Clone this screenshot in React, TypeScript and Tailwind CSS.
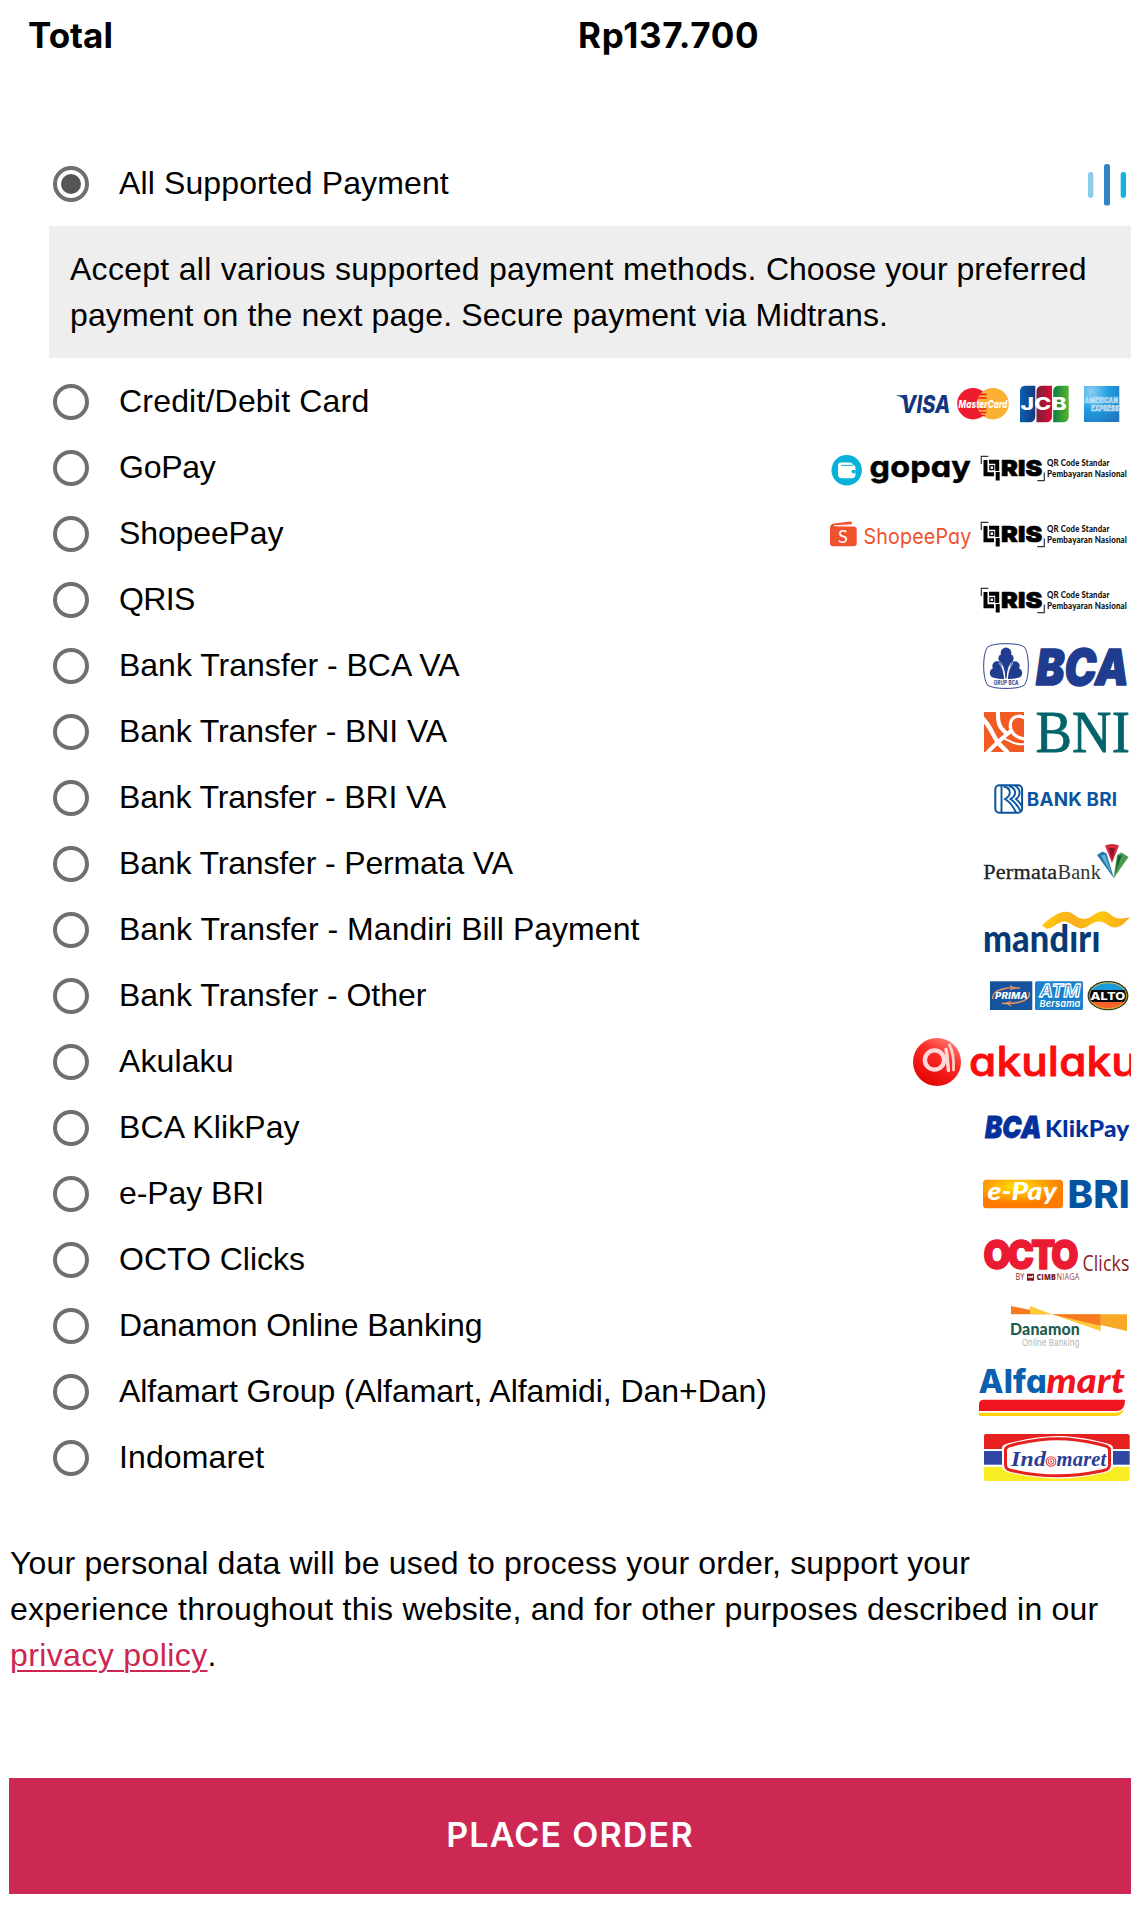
import type { ReactNode } from "react";

const INTER = "Inter, sans-serif";
const OPEN = "'Open Sans', sans-serif";
const LATO = "Lato, sans-serif";
const SERIF = "'Liberation Serif', serif";

/** A word inside a logo, fitted to the given width. */
function Word({
  x,
  y,
  w,
  size,
  fill,
  font = OPEN,
  weight = 700,
  italic = false,
  className,
  stroke,
  strokeWidth,
  spacing,
  children,
}: {
  x: number;
  y: number;
  w: number;
  size: number;
  fill: string;
  font?: string;
  weight?: number;
  italic?: boolean;
  className?: string;
  stroke?: string;
  strokeWidth?: number;
  spacing?: number;
  children: string;
}) {
  return (
    <text
      x={x}
      y={y}
      textLength={w}
      lengthAdjust="spacingAndGlyphs"
      letterSpacing={spacing}
      fontSize={size}
      fontFamily={font}
      fontWeight={weight}
      fontStyle={italic ? "italic" : "normal"}
      fill={fill}
      stroke={stroke}
      strokeWidth={strokeWidth}
      strokeLinejoin="round"
      className={className}
    >
      {children}
    </text>
  );
}

function Midtrans() {
  return (
    <>
      <rect x="268" y="21" width="5.3" height="26" rx="2.4" fill="#8ccbea" />
      <rect x="284" y="13" width="6" height="41.5" rx="2.6" fill="#3583c7" />
      <rect x="300.7" y="21" width="5.3" height="26" rx="2.4" fill="#12b2e0" />
    </>
  );
}

function Cards() {
  return (
    <>
      <defs>
        <linearGradient id="jcbBlue">
          <stop offset="0" stopColor="#0a5fb0" />
          <stop offset="1" stopColor="#123a80" />
        </linearGradient>
        <linearGradient id="jcbRed">
          <stop offset="0" stopColor="#7a2038" />
          <stop offset="1" stopColor="#dc0a38" />
        </linearGradient>
        <linearGradient id="jcbGreen">
          <stop offset="0" stopColor="#0a8040" />
          <stop offset="1" stopColor="#58b430" />
        </linearGradient>
        <radialGradient id="amex" cx="0.2" cy="0.15" r="1">
          <stop offset="0" stopColor="#8ccdf2" />
          <stop offset="0.5" stopColor="#1f9fe0" />
          <stop offset="1" stopColor="#2277c2" />
        </radialGradient>
      </defs>
      <path d="M76.7 26.3h8l3 4.5-2 2c-2-3.5-5-5.5-9-6z" fill="#133580" />
      <Word x={81} y={44.3} w={49.5} size={24} fill="#133580" font={INTER} weight={800} italic>
        VISA
      </Word>
      <circle cx="153" cy="34.7" r="15.8" fill="#ee1c2e" />
      <circle cx="172.9" cy="34.7" r="15.8" fill="#fcb034" />
      <path
        d="M159.500 25.500h7M158.500 29h8M158.500 40h8M159.500 43.500h7M161 46.500h4"
        stroke="#ee1c2e"
        strokeWidth="1.600"
      />
      <Word x={138.500} y={38.800} w={49} size={11} fill="#fff" font={INTER} weight={800} italic>
        MasterCard
      </Word>
      <path d="M205 16.700h10.300v31a5.600 5.600 0 0 1-5.600 5.600H200V22a5.300 5.300 0 0 1 5-5.300z" fill="url(#jcbBlue)" />
      <path d="M221.600 16.700H232v31a5.600 5.600 0 0 1-5.600 5.600h-9.900V22a5.300 5.300 0 0 1 5.100-5.300z" fill="url(#jcbRed)" />
      <path d="M238.300 16.700h10.400v31a5.600 5.600 0 0 1-5.600 5.600H233.200V22a5.300 5.300 0 0 1 5.100-5.300z" fill="url(#jcbGreen)" />
      <Word x={200.500} y={41} w={46.500} size={17.500} fill="#fff" font={INTER} weight={800}>
        JCB
      </Word>
      <rect x="264" y="17" width="35.300" height="36" fill="url(#amex)" />
      <Word x={264.600} y={34.300} w={33.500} size={7.500} fill="#2a8fd0" stroke="#d8effb" strokeWidth={0.700} font={INTER}>
        AMERICAN
      </Word>
      <Word x={271} y={42} w={28} size={7.500} fill="#2a8fd0" stroke="#d8effb" strokeWidth={0.700} font={INTER}>
        EXPRESS
      </Word>
    </>
  );
}

function Qris() {
  return (
    <>
      <path d="M161.300 29v-7.600h7M217.300 45.600h7v-8" fill="none" stroke="#333" strokeWidth="1.200" />
      <path d="M165.500 25v14.200h8.500M169 26.800h8.200V36" fill="none" stroke="#000" strokeWidth="4" />
      <rect x="169.900" y="30.800" width="3.800" height="3.800" fill="none" stroke="#000" strokeWidth="1.300" />
      <path d="M177.700 37v8.500" stroke="#000" strokeWidth="4" />
      <Word x={181} y={41} w={41.500} size={22} fill="#000" font={INTER} weight={900} stroke="#000" strokeWidth={0.700}>
        RIS
      </Word>
      <Word x={227} y={30.800} w={62.500} size={9.300} fill="#111" font={LATO} weight={900}>
        QR Code Standar
      </Word>
      <Word x={227} y={41.500} w={80} size={9.300} fill="#111" font={LATO} weight={900}>
        Pembayaran Nasional
      </Word>
    </>
  );
}

function GoPay() {
  return (
    <>
      <circle cx="26.700" cy="35.300" r="15.200" fill="#06b2d8" />
      <rect x="18" y="29.500" width="17.500" height="13.700" rx="4" fill="#fff" />
      <path d="M18 33v-2.500q0-3 3-3h9q2.500 0 3 2.500" fill="#fff" />
      <path d="M21 30.400h12" stroke="#06b2d8" strokeWidth="1" />
      <path d="M35.600 35h-2.500a1.600 1.600 0 0 0 0 3.200h2.500z" fill="#06b2d8" />
      <Word
        x={49.500}
        y={42}
        w={101.500}
        size={29.500}
        fill="#000"
        font={INTER}
        weight={700}
        stroke="#000"
        strokeWidth={0.500}
        className="[font-feature-settings:'cv11']"
      >
        gopay
      </Word>
      <Qris />
    </>
  );
}

function ShopeePay() {
  return (
    <>
      <path d="M10 27q0-4 4-4.500l16-2q2-.2 2 1.800v1.500L14 25.500h19.500q3.200 0 3.200 3.200v13.400q0 3.200-3.200 3.200H13.200Q10 45.300 10 42.100z" fill="#f1512c" />
      <path d="M14 24.700l18-.9" stroke="#fff" strokeWidth="1" />
      <Word x={18} y={42} w={10} size={17.500} fill="#fff" font={LATO} weight={400}>
        S
      </Word>
      <Word x={43.500} y={43.300} w={108} size={21} fill="#f1512c" font={INTER} weight={400} className="[font-feature-settings:'cv11']">
        ShopeePay
      </Word>
      <Qris />
    </>
  );
}

function Bca() {
  return (
    <>
      <path
        d="M186 10.700c9 0 15 1 18.500 3.500 2.500 4 3.800 10 3.800 18.800s-1.300 15-3.800 19c-3.500 2.400-9.500 3.400-18.500 3.400s-15-1-18.500-3.400c-2.500-4-3.800-10.200-3.800-19s1.300-14.800 3.800-18.800c3.500-2.500 9.500-3.500 18.500-3.500z"
        fill="#fff"
        stroke="#2a3f8f"
        strokeWidth="1"
      />
      <g fill="#203c8f">
        <circle cx="186" cy="20" r="5.400" />
        <circle cx="183" cy="25.500" r="4.600" />
        <circle cx="189" cy="25.500" r="4.600" />
        <path d="M179 27.500q6 4.500 6.400 18h1.200q.4-13.500 6.400-18z" />
        <circle cx="177" cy="33" r="4.700" />
        <circle cx="174.800" cy="40" r="5" />
        <path d="M180 30.500q4 6 4.300 15.500-5 .3-9.500-1l-2-8z" />
        <circle cx="195" cy="33" r="4.700" />
        <circle cx="197.200" cy="40" r="5" />
        <path d="M192 30.500q-4 6-4.300 15.500 5 .3 9.500-1l2-8z" />
      </g>
      <path d="M184.700 47.500q-.3-11-5.700-17.500M187.300 47.500q.3-11 5.700-17.500" fill="none" stroke="#fff" strokeWidth="0.700" />
      <Word x={173.700} y={52.200} w={25} size={5.800} fill="#2a3f8f" font={INTER}>
        GRUP BCA
      </Word>
      <Word x={216} y={51.700} w={93} size={49.500} fill="#203c8f" font={INTER} weight={900} italic stroke="#203c8f" strokeWidth={1.500}>
        BCA
      </Word>
    </>
  );
}

function Bni() {
  return (
    <>
      <clipPath id="bniBox">
        <rect x="164" y="13" width="40" height="40" />
      </clipPath>
      <rect x="164" y="13" width="40" height="40" fill="#f15a22" />
      <g clipPath="url(#bniBox)" fill="none" stroke="#fff">
        <path d="M162 19c8 7 10 16 15 23 3 5 7 7 11 12" strokeWidth="4.400" />
        <path d="M178 11c-.5 12 1 17 7 22 3 2.500 3 3 3 3" strokeWidth="4" />
        <path d="M206 20c-6-5-14-3-15.500 4-1.500 8 4 15 15 16" strokeWidth="3.200" />
        <path d="M192 31c-7 6-15 12-26 24" strokeWidth="4" />
        <path d="M180 39c7-1 11 8 24 6" strokeWidth="2" />
      </g>
      <Word x={215.500} y={52.800} w={94.500} size={59} fill="#02646a" font={SERIF} weight={400} stroke="#02646a" strokeWidth={0.800}>
        BNI
      </Word>
    </>
  );
}

function Bri() {
  return (
    <>
      <rect x="175.300" y="20.300" width="26.800" height="27.500" rx="4" fill="#fff" stroke="#0b559f" strokeWidth="2" />
      <path
        d="M181.500 21v26M183.500 21.500c7 1 9 8 1.500 12.500 5 3 8 7 11 13.500M189 21c7 2 8.500 9 1.500 13 4.500 3 7.500 7 10 12M195 21c6 3 6 9.500 1 13 2.500 2 4 4 5.500 6.500"
        fill="none"
        stroke="#0b559f"
        strokeWidth="1.900"
      />
      <Word x={206.800} y={41.200} w={90.500} size={18.800} fill="#0b559f" font={INTER} weight={700}>
        BANK BRI
      </Word>
    </>
  );
}

function Permata() {
  return (
    <>
      <Word x={163.300} y={48.300} w={74} size={20.500} fill="#222" font={SERIF} weight={400} stroke="#222" strokeWidth={0.300}>
        Permata
      </Word>
      <Word x={237.500} y={48.300} w={43.500} size={20.500} fill="#333" font={SERIF} weight={400}>
        Bank
      </Word>
      <path d="M285 14.500q7-3 14 0L292 32z" fill="#d32a40" />
      <path d="M289 17h6l-3 12z" fill="#8c1528" />
      <path d="M277 24l5.500-3.500 4 2 7.500 25z" fill="#2277a8" />
      <path d="M281 24.500l4-1 7 20z" fill="#5fb3d6" />
      <path d="M308.500 26l-7-4.500-4.500 2.500-3.500 23.500z" fill="#4a9a4c" />
      <path d="M298 25l4-1-7 19z" fill="#15603c" />
    </>
  );
}

function Mandiri() {
  return (
    <>
      <defs>
        <linearGradient id="ribbon">
          <stop offset="0" stopColor="#fec80e" />
          <stop offset="0.400" stopColor="#f9ae1a" />
          <stop offset="0.650" stopColor="#fec80e" />
          <stop offset="1" stopColor="#f7a71c" />
        </linearGradient>
      </defs>
      <path
        d="M222 28.500C231 20 239 14.500 247 14.800c7 .5 9 7 17 7.200 7 0 11-7.500 19-7.800 7 0 9 7.300 17 7.300 4 0 7-.8 9.800-1.300-5 6-9 10-14.800 10.200-7 0-9-5.900-16-5.900s-12 6.700-17 6.900c-8 0-11-6.700-18-6.900-6 0-11 7.300-17.500 7.300z"
        fill="url(#ribbon)"
      />
      <Word x={163} y={55.300} w={117.500} size={37.500} fill="#053a74" font={LATO} weight={900}>
        mandırı
      </Word>
    </>
  );
}

function OtherBanks() {
  return (
    <>
      <clipPath id="altoClip">
        <ellipse cx="288" cy="32.700" rx="19.500" ry="13.600" />
      </clipPath>
      <rect x="170" y="18.300" width="42.300" height="28.700" fill="#15539f" />
      <path d="M173 36c-2-5 4-9 12-10.500 5-.9 11-1 15-.3M209 29c2 5-3 9-11 10.500-5 .9-12 1.300-16 .8" fill="none" stroke="#f0955a" strokeWidth="1.400" />
      <path d="M190 22.500l4.500 3-4.500 1M191 43l-5-3 5-1.500" fill="none" stroke="#f0955a" strokeWidth="1.100" />
      <Word x={175} y={35.800} w={33} size={9.300} fill="#fff" font={INTER} weight={800} italic>
        PRIMA
      </Word>
      <rect x="215" y="18.300" width="48" height="28.700" rx="1.500" fill="#1a80cb" />
      <Word x={219.500} y={34.300} w={41} size={18} fill="#1a80cb" stroke="#fff" strokeWidth={1.300} font={INTER} weight={700} italic>
        ATM
      </Word>
      <Word x={219.500} y={43.600} w={41} size={9.500} fill="#fff" font={INTER} weight={600} italic>
        Bersama
      </Word>
      <g clipPath="url(#altoClip)">
        <rect x="267" y="18" width="42" height="10" fill="#1a9be0" />
        <rect x="267" y="27" width="42" height="12" fill="#0a0a0a" />
        <rect x="267" y="39" width="42" height="9" fill="#f7622a" />
      </g>
      <ellipse cx="288" cy="32.700" rx="19.800" ry="14" fill="none" stroke="#28301c" strokeWidth="1.200" />
      <ellipse cx="288" cy="32.700" rx="18.800" ry="13" fill="none" stroke="#d8c030" strokeWidth="0.900" />
      <Word x={270.500} y={36.600} w={35} size={10.800} fill="#fff" font={INTER} weight={800}>
        ALTO
      </Word>
    </>
  );
}

function Akulaku() {
  return (
    <>
      <defs>
        <linearGradient id="aku" x1="0.800" y1="0.100" x2="0.300" y2="1">
          <stop offset="0" stopColor="#ff7068" />
          <stop offset="0.350" stopColor="#fb2a26" />
          <stop offset="1" stopColor="#e20404" />
        </linearGradient>
      </defs>
      <circle cx="117" cy="33" r="24" fill="url(#aku)" />
      <circle cx="114.500" cy="31" r="9.600" fill="none" stroke="#ffd9d9" strokeWidth="4.400" />
      <path d="M126 20.500c1.500 6 1.500 14 2.500 21" fill="none" stroke="#ffd9d9" strokeWidth="3.400" strokeLinecap="round" />
      <path d="M129.500 16c3.500 7 4.500 16 4 25" fill="none" stroke="#ffd0cc" strokeWidth="2.800" strokeLinecap="round" />
      <Word
        x={149}
        y={46.500}
        w={169}
        size={40.500}
        fill="#fb0d0d"
        font={INTER}
        weight={500}
        stroke="#fb0d0d"
        strokeWidth={0.900}
        className="[font-feature-settings:'cv11']"
      >
        akulaku
      </Word>
    </>
  );
}

function KlikPay() {
  return (
    <>
      <Word x={165} y={42.500} w={56.500} size={30.500} fill="#03309c" font={INTER} weight={900} italic stroke="#03309c" strokeWidth={0.800}>
        BCA
      </Word>
      <Word x={225} y={42} w={84.500} size={23} fill="#03309c" font={LATO} weight={900}>
        KlikPay
      </Word>
    </>
  );
}

function EPay() {
  return (
    <>
      <defs>
        <radialGradient id="epay" cx="0.420" cy="0.250" r="0.600">
          <stop offset="0" stopColor="#ffe600" />
          <stop offset="0.500" stopColor="#ffae00" />
          <stop offset="1" stopColor="#fe7a00" />
        </radialGradient>
      </defs>
      <rect x="163" y="18.700" width="80" height="28.500" rx="3.500" fill="url(#epay)" />
      <Word x={167.500} y={39.300} w={69.500} size={24} fill="#fff" font={LATO} weight={900} italic>
        e-Pay
      </Word>
      <Word x={247.500} y={47} w={62.500} size={38} fill="#0354a0" font={INTER} weight={800}>
        BRI
      </Word>
    </>
  );
}

function Octo() {
  return (
    <>
      <Word x={163.500} y={42.300} w={92} size={40} fill="#ea1b33" font={INTER} weight={900} stroke="#ea1b33" strokeWidth={1.600} spacing={-3.200}>
        OCTO
      </Word>
      <Word x={262.500} y={44} w={47} size={22} fill="#8c1a1e" weight={400}>
        Clicks
      </Word>
      <Word x={195.500} y={53} w={9} size={8.500} fill="#8c2a2e" weight={400}>
        BY
      </Word>
      <rect x="207" y="46.700" width="7" height="7" fill="#8c0f18" />
      <path d="M208 49.300h3.500l1.500-1v2.500h-5z" fill="#fff" />
      <Word x={216.500} y={53} w={19.500} size={8.500} fill="#7a1a20" weight={800}>
        CIMB
      </Word>
      <Word x={236.500} y={53} w={23} size={8.500} fill="#9c4a50" weight={400}>
        NIAGA
      </Word>
    </>
  );
}

function Danamon() {
  return (
    <>
      <path d="M191 13l40.700 8.300H191z" fill="#f47b20" />
      <path d="M210 13l22 8.300h-22z" fill="#fdc83a" />
      <path d="M231.700 21.300l49 16.700V21.300z" fill="#fdc83a" />
      <path d="M231.700 21.300l49 11.500V21.300z" fill="#f47b20" />
      <path d="M280.700 21.300H307V38l-26.300-6z" fill="#f9a825" />
      <Word x={190} y={42.300} w={70} size={16} fill="#1e5b50" font={LATO} weight={900}>
        Danamon
      </Word>
      <Word x={202} y={52.700} w={57.500} size={9.300} fill="#b4b4b4" font={INTER} weight={400}>
        Online Banking
      </Word>
    </>
  );
}

function Alfamart() {
  return (
    <>
      <Word x={158.500} y={34.300} w={68.500} size={32.500} fill="#0b5fae" font={INTER} weight={800} className="[font-feature-settings:'cv11']">
        Alfa
      </Word>
      <Word x={226.500} y={34.300} w={78.500} size={34.500} fill="#ee1520" font={LATO} weight={900} italic>
        mart
      </Word>
      <path d="M164 40.700h141q0 11.300-9 11.300H159v-6.500q0-4.800 5-4.800z" fill="#ee1520" />
      <path d="M159 53.700h136q5 0 9-3.500-2 6.700-9 6.700H159z" fill="#ffd20a" />
    </>
  );
}

function Indomaret() {
  return (
    <>
      <clipPath id="indoBox">
        <rect x="164" y="9" width="145.700" height="47" rx="2" />
      </clipPath>
      <g clipPath="url(#indoBox)">
        <rect x="164" y="9" width="146" height="15" fill="#e5201f" />
        <rect x="164" y="24" width="146" height="18" fill="#fff" />
        <rect x="164" y="26" width="146" height="13.700" fill="#3048a4" />
        <rect x="164" y="42" width="146" height="14" fill="#f8ec22" />
      </g>
      <path
        d="M237.500 11c14 0 30 2.500 44 6 8 1.800 11.500 3 11.500 6v18c0 4-3 5.500-11 7.500-14 3-30 5-44.500 5s-30.500-2-44.500-5c-8-2-11-3.500-11-7.500V23c0-3 3.500-4.200 11.500-6 14-3.500 30-6 44-6z"
        fill="#fff"
      />
      <path
        d="M237.500 13.700c14 0 29 2.500 42 5.500 8 1.800 10 3 10 6v14.500c0 4-2 5-9.500 6.500-14 3-28.500 4.600-42.500 4.600s-28.500-1.600-42.500-4.600c-7.500-1.500-9.500-2.500-9.500-6.500V25.200c0-3 2-4.200 10-6 13-3 28-5.500 42-5.500z"
        fill="#fff"
        stroke="#e5201f"
        strokeWidth="3"
      />
      <Word x={191} y={41.300} w={35} size={21} fill="#2a3c94" font={SERIF} weight={700} italic>
        Ind
      </Word>
      <Word x={236.500} y={41.300} w={50} size={21} fill="#2a3c94" font={SERIF} weight={700} italic>
        maret
      </Word>
      <circle cx="231" cy="36.500" r="4.800" fill="#fff" stroke="#e5403f" strokeWidth="1.100" />
      <circle cx="231" cy="36.500" r="2.800" fill="#fff" stroke="#e5403f" strokeWidth="1" />
      <circle cx="231" cy="36.500" r="1" fill="#e5403f" />
    </>
  );
}

const methods: { label: string; tracking: string; logo: ReactNode }[] = [
  { label: "Credit/Debit Card", tracking: "tracking-[0.19px]", logo: <Cards /> },
  { label: "GoPay", tracking: "tracking-[-0.25px]", logo: <GoPay /> },
  { label: "ShopeePay", tracking: "tracking-[-0.12px]", logo: <ShopeePay /> },
  { label: "QRIS", tracking: "tracking-[-0.6px]", logo: <Qris /> },
  { label: "Bank Transfer - BCA VA", tracking: "tracking-[-0.01px]", logo: <Bca /> },
  { label: "Bank Transfer - BNI VA", tracking: "tracking-[-0.1px]", logo: <Bni /> },
  { label: "Bank Transfer - BRI VA", tracking: "tracking-[-0.15px]", logo: <Bri /> },
  { label: "Bank Transfer - Permata VA", tracking: "tracking-[-0.15px]", logo: <Permata /> },
  { label: "Bank Transfer - Mandiri Bill Payment", tracking: "tracking-[0.03px]", logo: <Mandiri /> },
  { label: "Bank Transfer - Other", tracking: "tracking-[-0.01px]", logo: <OtherBanks /> },
  { label: "Akulaku", tracking: "tracking-[0.1px]", logo: <Akulaku /> },
  { label: "BCA KlikPay", tracking: "tracking-[0.1px]", logo: <KlikPay /> },
  { label: "e-Pay BRI", tracking: "tracking-[-0.1px]", logo: <EPay /> },
  { label: "OCTO Clicks", tracking: "tracking-[0px]", logo: <Octo /> },
  { label: "Danamon Online Banking", tracking: "tracking-[-0.05px]", logo: <Danamon /> },
  { label: "Alfamart Group (Alfamart, Alfamidi, Dan+Dan)", tracking: "tracking-[-0.05px]", logo: <Alfamart /> },
  { label: "Indomaret", tracking: "tracking-[0.12px]", logo: <Indomaret /> },
];

function Method({
  label,
  logo,
  tracking,
  selected = false,
}: {
  label: string;
  logo: ReactNode;
  tracking: string;
  selected?: boolean;
}) {
  return (
    <li className="flex h-[66px] items-center pl-[53px]">
      <span className="flex size-9 shrink-0 items-center justify-center rounded-full border-4 border-[#6f6f6f] bg-white">
        {selected && <span className="size-5 rounded-full bg-[#555]" />}
      </span>
      <span className={`ml-[30px] flex-1 pb-[2px] whitespace-nowrap ${tracking}`}>{label}</span>
      <svg width="311" height="66" viewBox="0 0 311 66" className="shrink-0">
        {logo}
      </svg>
    </li>
  );
}

export default function App() {
  return (
    <main className="h-[1926px] w-[1131px] overflow-hidden bg-white font-['Liberation_Sans',sans-serif] text-[32px] leading-[46px] tracking-[0.17px] text-black">
      <div className="flex h-[70px] items-center pl-[28px] font-['Inter',sans-serif] text-[35px] font-bold tracking-normal">
        <span className="w-[550px]">Total</span>
        <span className="tracking-[0.65px]">Rp137.700</span>
      </div>

      <ul className="mt-[81px]">
        <Method label="All Supported Payment" tracking="tracking-[0.12px]" logo={<Midtrans />} selected />
      </ul>
      <div className="mt-[9px] ml-[49px] bg-[#eee] py-5 pl-[21px]">
        <p className="whitespace-nowrap">
          <span className="tracking-[0.28px]">Accept all various supported payment methods. </span>
          <span className="tracking-[0.02px]">Choose your preferred</span>
          <br />
          <span className="tracking-[0.13px]">payment on the next page. Secure payment via Midtrans.</span>
        </p>
      </div>
      <ul className="mt-[11px]">
        {methods.map((m) => (
          <Method key={m.label} label={m.label} tracking={m.tracking} logo={m.logo} />
        ))}
      </ul>

      <p className="mt-[49px] pl-[10px] whitespace-nowrap">
        Your personal data will be used to process your order, support your
        <br />
        <span className="tracking-[0.235px]">
          experience throughout this website, and for other purposes described in our
        </span>
        <br />
        <a className="tracking-[0.39px] text-[#cd2653] underline decoration-2 underline-offset-4">privacy policy</a>.
      </p>

      <button className="mt-[100px] ml-[9px] flex h-[116px] w-[1122px] items-center justify-center bg-[#cd2753] pb-[3px] font-['Inter',sans-serif] text-[34px] font-semibold tracking-[1.2px] text-white">
        PLACE ORDER
      </button>
    </main>
  );
}
